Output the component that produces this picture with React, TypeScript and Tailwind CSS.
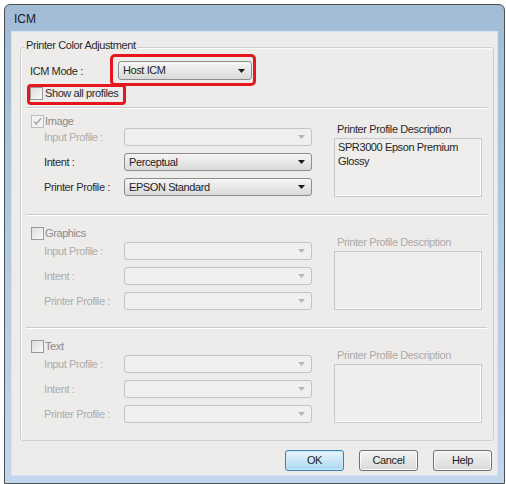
import clsx from "clsx";

const FONT = "font-['Liberation_Sans',Arial,sans-serif]";

function Arrow({ disabled }: { disabled?: boolean }) {
  return (
    <svg width="7" height="4" viewBox="0 0 7 4" className="shrink-0">
      <path d="M0 0h7L3.5 4z" fill={disabled ? "#b6b6b6" : "#1c1c1c"} />
    </svg>
  );
}

function Combo({ value, disabled, className }: { value?: string; disabled?: boolean; className?: string }) {
  return (
    <div
      className={clsx(
        "flex items-center justify-between rounded-[3px] border pl-[4px] pr-[6px]",
        disabled
          ? "border-[#c3c3c3] bg-[#efefee]"
          : "border-[#8d8d8d] bg-gradient-to-b from-[#f5f5f5] to-[#dadada] text-[#1e1e1e]",
        className
      )}
    >
      <span>{value}</span>
      <Arrow disabled={disabled} />
    </div>
  );
}

function Check({ checked, disabled }: { checked?: boolean; disabled?: boolean }) {
  return (
    <span
      className={clsx(
        "flex h-[13px] w-[13px] shrink-0 items-center justify-center border",
        disabled
          ? "border-[#bdbdbd] bg-[#f3f3f3]"
          : "border-[#999] bg-gradient-to-br from-[#dcdcdc] to-[#fafafa]"
      )}
    >
      {checked && (
        <svg width="9" height="9" viewBox="0 0 9 9">
          <path d="M1 4.5l2.3 2.5L8 1.2" fill="none" stroke="#a9a9a9" strokeWidth="1.6" />
        </svg>
      )}
    </span>
  );
}

function Sep() {
  return <div className="ml-[5px] h-0 w-[461px] border-t border-b border-t-[#cbcbcb] border-b-white" />;
}

function Row({ label, value, disabled }: { label: string; value?: string; disabled?: boolean }) {
  return (
    <div className="ml-[13px] flex h-[18px] items-center">
      <span className={clsx("w-[80px] leading-[14px]", disabled ? "text-[#acacac]" : "text-[#2a2a2a]")}>{label}</span>
      <Combo value={value} disabled={disabled} className="h-[18px] w-[188px]" />
    </div>
  );
}

type SectionProps = {
  title: string;
  checked?: boolean;
  enabled?: boolean;
  compact?: boolean;
  intent?: string;
  profile?: string;
  desc?: string;
};

function Section({ title, checked, enabled, compact, intent, profile, desc }: SectionProps) {
  return (
    <>
      <Sep />
      <div className="flex pb-[17px]">
        <div className={clsx("ml-[10px] w-[281px]", compact ? "pt-[5px]" : "pt-[10px]")}>
          <div className="flex h-[14px] items-center gap-[1px]">
            <Check checked={checked} disabled={enabled} />
            <span className="leading-[14px] text-[#8a8a8a]">{title}</span>
          </div>
          <div className={clsx("flex flex-col gap-[7px]", compact ? "" : "mt-[2px]")}>
            <Row label="Input Profile :" disabled />
            <Row label="Intent :" value={intent} disabled={!enabled} />
            <Row label="Printer Profile :" value={profile} disabled={!enabled} />
          </div>
        </div>
        <div className={clsx("ml-[22px] w-[148px]", compact ? "pt-[13px]" : "pt-[19px]")}>
          <div className={clsx("pl-[3px] leading-[14px]", enabled ? "text-[#2a2a2a]" : "text-[#ababab]")}>
            Printer Profile Description
          </div>
          <div className="mt-[2px] h-[59px] border border-[#c8c8c8] bg-[#efeeec] px-[3px] pt-[1px] leading-[14px] text-[#1e1e1e] shadow-[inset_-1px_-1px_0_#fff]">
            {desc}
          </div>
        </div>
      </div>
    </>
  );
}

function Button({ label, primary }: { label: string; primary?: boolean }) {
  return (
    <div
      className={clsx(
        "flex h-[21px] w-[59px] items-center justify-center rounded-[3px] border text-[#1e1e1e]",
        primary
          ? "border-[#3c7fb1] bg-gradient-to-b from-[#e8f5fc] to-[#a9d7f2] shadow-[inset_0_0_0_1px_#c9eafc]"
          : "border-[#707070] bg-gradient-to-b from-[#f3f3f3] to-[#d9d9d9] shadow-[inset_0_0_0_1px_#fbfbfb]"
      )}
    >
      {label}
    </div>
  );
}

export default function App() {
  return (
    <div className={clsx("h-[484px] w-[506px] bg-white pl-[4px] pt-[4px] text-[11px] tracking-[-0.4px]", FONT)}>
      <div className="flex h-[480px] w-[501px] flex-col rounded-t-[6px] border border-[#4a4f55] bg-gradient-to-b from-[#a2bcd8] to-[#c2d7ec]">
        <div className="flex h-[27px] items-center pl-[9px] text-[12px] tracking-normal text-[#1a1a1a]">ICM</div>
        <div className="ml-[7px] h-[443px] w-[485px] bg-[#edecea] shadow-[0_0_0_1px_#d6e3f0]">
          <div className="ml-[8px] mt-[15px] w-[474px] rounded-[3px] border border-[#cfcfcf] shadow-[inset_1px_1px_0_#fafafa]">
            <div className="ml-[4px] -mt-[10px] w-fit bg-[#edecea] px-[1px] leading-[14px] text-[#2a2a2a]">
              Printer Color Adjustment
            </div>
            <div className="ml-[9px] mt-[9px] flex h-[19px] items-center">
              <span className="w-[88px] leading-[14px] text-[#2a2a2a]">ICM Mode :</span>
              <div className="relative">
                <Combo value="Host ICM" className="h-[19px] w-[134px]" />
                <div className="absolute bottom-[-6px] left-[-8px] right-[-4px] top-[-7px] rounded-[5px] border-[3px] border-[#e6161e]" />
              </div>
            </div>
            <div className="relative ml-[9px] mt-[6px] flex h-[14px] items-center gap-[2px]">
              <Check />
              <span className="leading-[14px] text-[#2a2a2a]">Show all profiles</span>
              <div className="absolute left-[-3px] top-[-2px] h-[21px] w-[99px] rounded-[4px] border-[3px] border-[#e6161e]" />
            </div>
            <div className="mt-[7px]">
              <Section
                title="Image"
                checked
                enabled
                compact
                intent="Perceptual"
                profile="EPSON Standard"
                desc="SPR3000 Epson Premium Glossy"
              />
              <Section title="Graphics" />
              <Section title="Text" />
            </div>
          </div>
          <div className="mt-[9px] flex justify-end gap-[15px] pr-[5px]">
            <Button label="OK" primary />
            <Button label="Cancel" />
            <Button label="Help" />
          </div>
        </div>
      </div>
    </div>
  );
}
